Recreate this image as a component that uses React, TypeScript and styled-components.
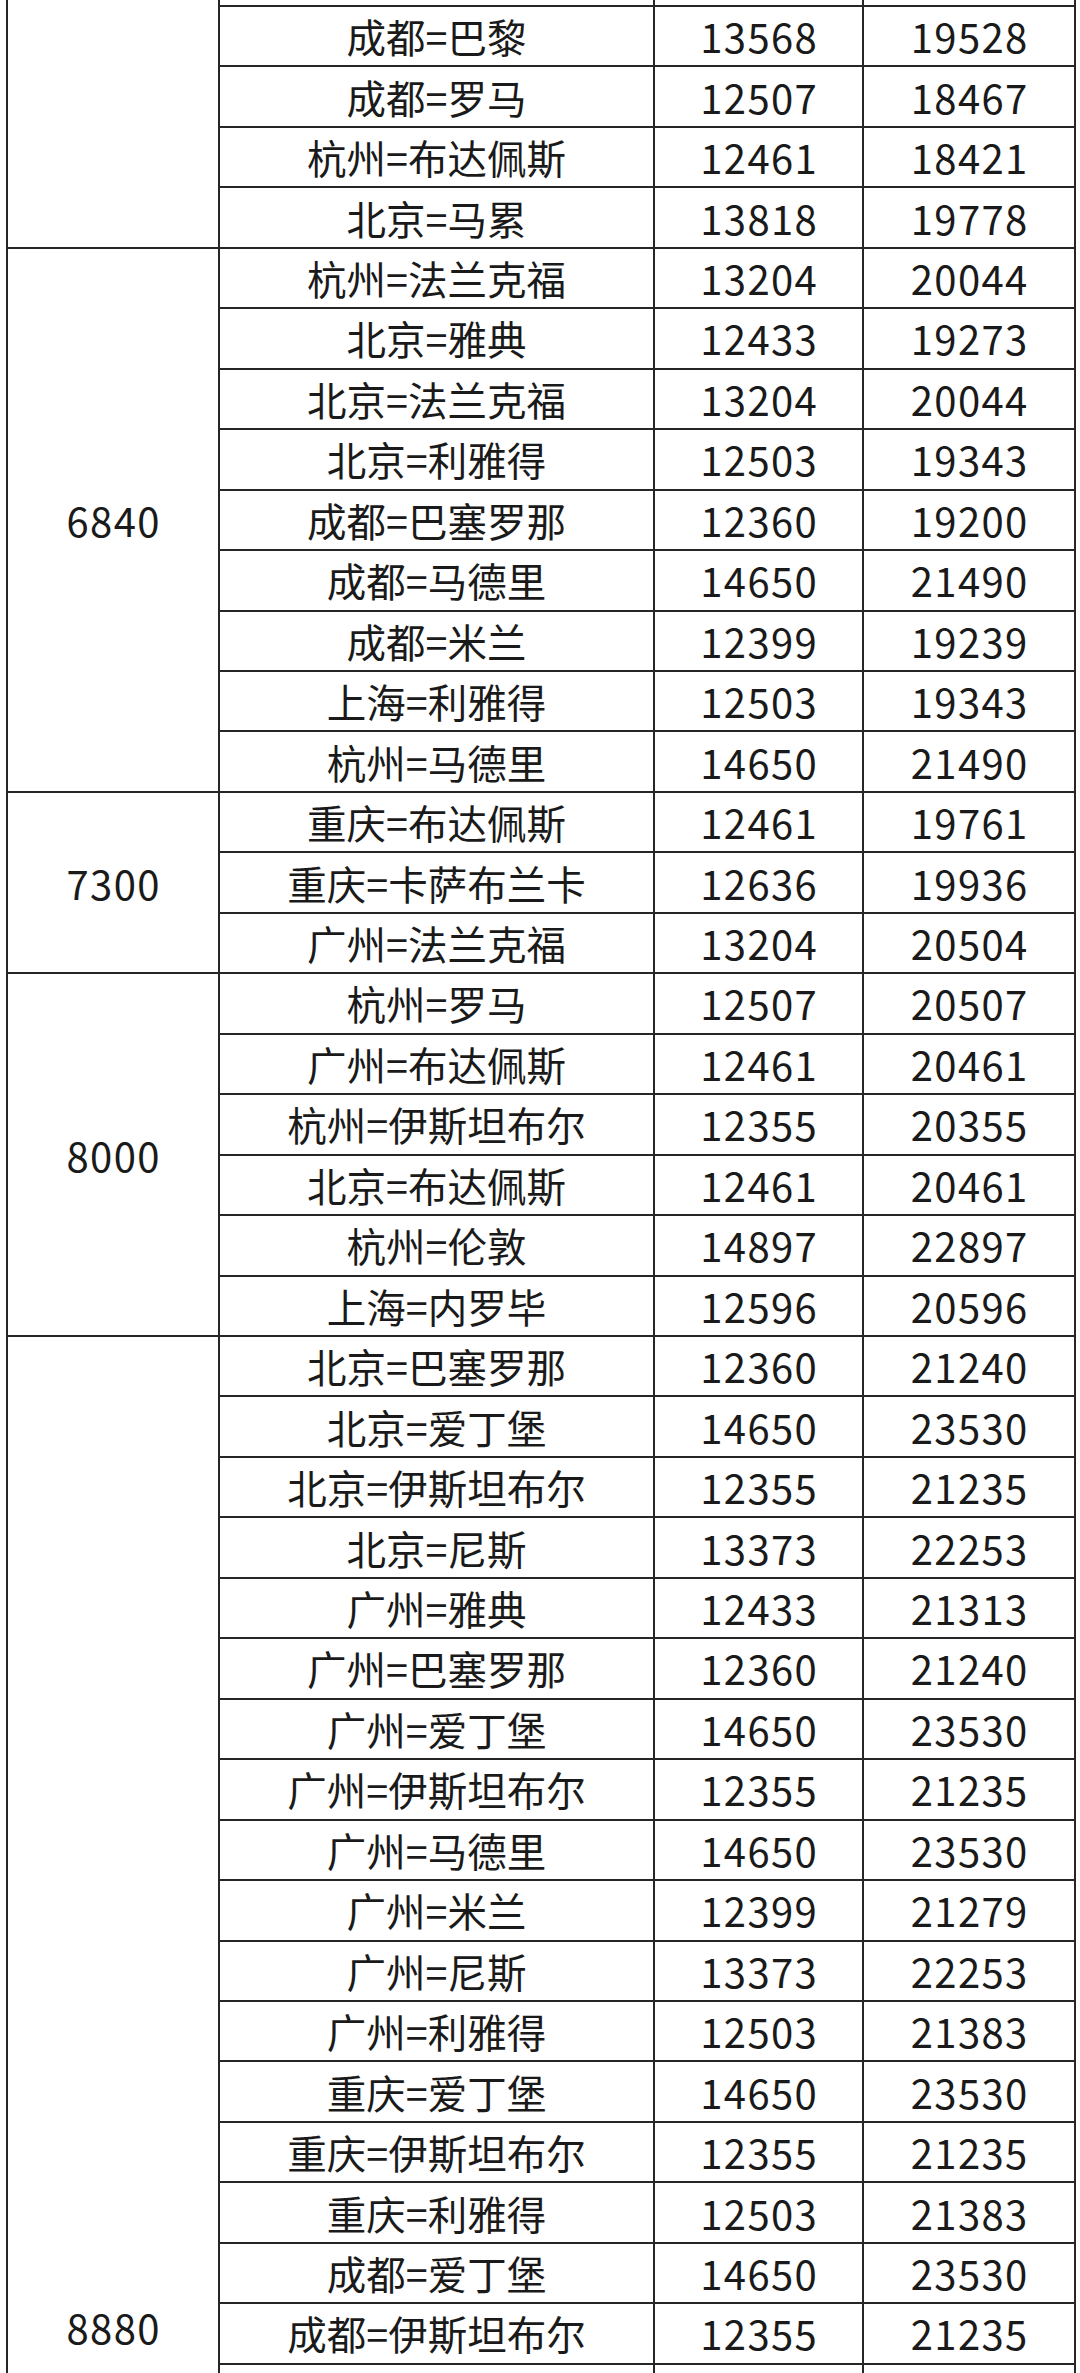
import React from 'react';
import styled, { createGlobalStyle } from 'styled-components';

type Route = { route: string; base: string; total: string };
type Group = {
  label: string;
  rows: (Route | null)[];
  labelOffset?: number;
};

const groups: Group[] = [
  {
    label: '',
    rows: [
      null,
      { route: '成都=巴黎', base: '13568', total: '19528' },
      { route: '成都=罗马', base: '12507', total: '18467' },
      { route: '杭州=布达佩斯', base: '12461', total: '18421' },
      { route: '北京=马累', base: '13818', total: '19778' },
    ],
  },
  {
    label: '6840',
    rows: [
      { route: '杭州=法兰克福', base: '13204', total: '20044' },
      { route: '北京=雅典', base: '12433', total: '19273' },
      { route: '北京=法兰克福', base: '13204', total: '20044' },
      { route: '北京=利雅得', base: '12503', total: '19343' },
      { route: '成都=巴塞罗那', base: '12360', total: '19200' },
      { route: '成都=马德里', base: '14650', total: '21490' },
      { route: '成都=米兰', base: '12399', total: '19239' },
      { route: '上海=利雅得', base: '12503', total: '19343' },
      { route: '杭州=马德里', base: '14650', total: '21490' },
    ],
  },
  {
    label: '7300',
    rows: [
      { route: '重庆=布达佩斯', base: '12461', total: '19761' },
      { route: '重庆=卡萨布兰卡', base: '12636', total: '19936' },
      { route: '广州=法兰克福', base: '13204', total: '20504' },
    ],
  },
  {
    label: '8000',
    rows: [
      { route: '杭州=罗马', base: '12507', total: '20507' },
      { route: '广州=布达佩斯', base: '12461', total: '20461' },
      { route: '杭州=伊斯坦布尔', base: '12355', total: '20355' },
      { route: '北京=布达佩斯', base: '12461', total: '20461' },
      { route: '杭州=伦敦', base: '14897', total: '22897' },
      { route: '上海=内罗毕', base: '12596', total: '20596' },
    ],
  },
  {
    label: '8880',
    labelOffset: 968,
    rows: [
      { route: '北京=巴塞罗那', base: '12360', total: '21240' },
      { route: '北京=爱丁堡', base: '14650', total: '23530' },
      { route: '北京=伊斯坦布尔', base: '12355', total: '21235' },
      { route: '北京=尼斯', base: '13373', total: '22253' },
      { route: '广州=雅典', base: '12433', total: '21313' },
      { route: '广州=巴塞罗那', base: '12360', total: '21240' },
      { route: '广州=爱丁堡', base: '14650', total: '23530' },
      { route: '广州=伊斯坦布尔', base: '12355', total: '21235' },
      { route: '广州=马德里', base: '14650', total: '23530' },
      { route: '广州=米兰', base: '12399', total: '21279' },
      { route: '广州=尼斯', base: '13373', total: '22253' },
      { route: '广州=利雅得', base: '12503', total: '21383' },
      { route: '重庆=爱丁堡', base: '14650', total: '23530' },
      { route: '重庆=伊斯坦布尔', base: '12355', total: '21235' },
      { route: '重庆=利雅得', base: '12503', total: '21383' },
      { route: '成都=爱丁堡', base: '14650', total: '23530' },
      { route: '成都=伊斯坦布尔', base: '12355', total: '21235' },
      null,
    ],
  },
];

const columnWidths = [212, 435, 209, 212];

const GlobalStyle = createGlobalStyle`
  html, body {
    margin: 0;
    padding: 0;
    background: #ffffff;
  }
  body {
    font-family: "Noto Sans CJK SC", "Noto Sans", sans-serif;
  }
`;

const Page = styled.div`
  width: 1080px;
  height: 2373px;
  overflow: hidden;
  background: #ffffff;
  padding-left: 6px;
  box-sizing: border-box;
`;

const Table = styled.table`
  border-collapse: collapse;
  table-layout: fixed;
  width: 1068px;
  color: #1a1a1a;
  font-family: "Noto Sans CJK SC", "Noto Sans", sans-serif;
  font-size: 39.5px;
  line-height: 44px;
`;

const Col = styled.col<{ $w: number }>`
  width: ${(p) => p.$w}px;
`;

const Row = styled.tr<{ $partial?: boolean }>`
  height: ${(p) => (p.$partial ? '6px' : '60.46px')};
`;

const Cell = styled.td<{ $open?: boolean }>`
  border: 2px solid #262626;
  border-top: ${(p) => (p.$open ? 'none' : '2px solid #262626')};
  padding: 0;
  text-align: center;
  vertical-align: middle;
  white-space: nowrap;
  overflow: hidden;
`;

const RouteCell = styled(Cell)`
  letter-spacing: 0;
`;

const NumberCell = styled(Cell)`
  font-size: 40px;
  letter-spacing: 1.4px;
  text-indent: 1.4px;
`;

const GroupCell = styled(NumberCell)<{ $offset?: number }>`
  vertical-align: ${(p) => (p.$offset != null ? 'top' : 'middle')};
  padding-top: ${(p) => p.$offset ?? 0}px;
`;

export default function App() {
  return (
    <Page>
      <GlobalStyle />
      <Table>
        <colgroup>
          {columnWidths.map((w, i) => (
            <Col key={i} $w={w} />
          ))}
        </colgroup>
        <tbody>
          {groups.map((g, gi) =>
            g.rows.map((r, ri) => {
              const first = gi === 0 && ri === 0;
              return (
                <Row key={`${gi}-${ri}`} $partial={first}>
                  {ri === 0 && (
                    <GroupCell rowSpan={g.rows.length} $open={first} $offset={g.labelOffset}>
                      {g.label}
                    </GroupCell>
                  )}
                  <RouteCell $open={first}>{r?.route ?? ''}</RouteCell>
                  <NumberCell $open={first}>{r?.base ?? ''}</NumberCell>
                  <NumberCell $open={first}>{r?.total ?? ''}</NumberCell>
                </Row>
              );
            })
          )}
        </tbody>
      </Table>
    </Page>
  );
}
